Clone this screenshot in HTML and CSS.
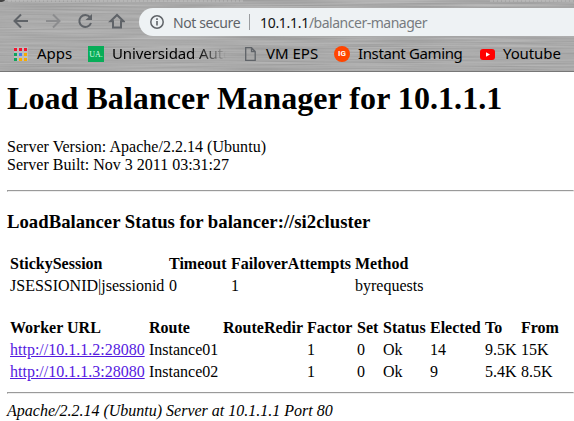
FILE: index.html
```html
<!DOCTYPE html>
<html lang="en">
<head>
<meta charset="utf-8">
<title>Balancer Manager</title>
<link rel="stylesheet" href="styles.css">
</head>
<body>
<header class="browser">
  <svg class="metal" width="574" height="72" aria-hidden="true">
    <filter id="brushed" x="0" y="0" width="100%" height="100%" color-interpolation-filters="sRGB">
      <feTurbulence type="fractalNoise" baseFrequency="0.009 0.6" numOctaves="2" seed="4"/>
      <feColorMatrix values="0.17 0 0 0 0.582  0.17 0 0 0 0.582  0.17 0 0 0 0.582  0 0 0 0 1"/>
    </filter>
    <rect width="574" height="72" filter="url(#brushed)"/>
    <path d="M8 1H243M490 1H574" stroke="#c2c2c2" stroke-width="2" stroke-dasharray="3 1" opacity=".5"/>
    <path d="M0 0H5Q4 2 0 2Z" fill="#444"/>
  </svg>
  <div class="toolbar">
    <svg class="nav" viewBox="0 0 112 16" width="112" height="16" fill="none" stroke="#5f6368" stroke-width="2">
      <path d="M15 8H2.500M8 1.500 1.500 8 8 14.500"/>
      <path d="M33 8H45.500M40 1.500 46.500 8 40 14.500" stroke="#8b8c8e"/>
      <path d="M77 4.200A6 6 0 1 0 78 10"/>
      <path d="M79 1V7H72.500Z" fill="#5f6368" stroke="none"/>
      <path d="M97.500 8.300H100V14.500H108V8.300H110.500L104 2Z"/>
    </svg>
    <div class="omnibox">
      <svg width="14" height="14" viewBox="0 0 14 14"><circle cx="7" cy="7" r="6.200" fill="none" stroke="#5f6368" stroke-width="1.500"/><path d="M7 6V10.500M7 3.300V4.900" stroke="#5f6368" stroke-width="1.600"/></svg>
      <span class="secure">Not secure</span>
      <span class="divider"></span>
      <span class="url"><b>10.1.1.1</b>/balancer-manager</span>
    </div>
  </div>
  <nav class="bookmarks">
    <span class="mark apps"><svg width="14" height="14"><path d="M0 0h14v14H0z" fill="#dedede" opacity=".35"/><path d="M0 1h3v3H0zM5 1h3v3H5zM10 1h3v3h-3z" fill="#f01630"/><path d="M0 6h3v3H0zM0 11h3v3H0z" fill="#0fa45c"/><path d="M5 6h3v3H5z" fill="#4979ee"/><path d="M10 6h3v3h-3zM5 11h3v3H5zM10 11h3v3h-3z" fill="#f8ab00"/></svg><span>Apps</span></span>
    <span class="mark uni"><i class="ua">UA.</i><span>Universidad Auto</span></span>
    <span class="mark vm"><svg width="11" height="14" fill="none" stroke="#5f6368" stroke-width="1.300"><path d="M.7.700H6.500L10.200 4.500V13.300H.7ZM6.500.7V4.500H10.200"/></svg><span>VM EPS</span></span>
    <span class="mark ig"><i class="disc">IG</i><span>Instant Gaming</span></span>
    <span class="mark yt"><svg width="15" height="11"><rect width="15" height="11" rx="3" fill="#f00"/><path d="M6 3.200V7.800L10 5.500Z" fill="#fff"/></svg><span>Youtube</span></span>
  </nav>
</header>
<main>
  <h1>Load Balancer Manager for 10.1.1.1</h1>
  <dl>
    <dt class="version">Server Version: Apache/2.2.14 (Ubuntu)</dt>
    <dt>Server Built: Nov  3 2011 03:31:27</dt>
  </dl>
  <hr>
  <h3>LoadBalancer Status for balancer://si2cluster</h3>
  <table>
    <colgroup><col class="w155"><col class="w58"><col class="w120"><col></colgroup>
    <tr><th>StickySession</th><th>Timeout</th><th>FailoverAttempts</th><th>Method</th></tr>
    <tr><td>JSESSIONID|jsessionid</td><td>0</td><td>1</td><td>byrequests</td></tr>
  </table>
  <br>
  <table>
    <colgroup><col class="w135"><col class="w70"><col class="w80"><col class="w46"><col class="w22"><col class="w43"><col class="w51"><col class="w32"><col></colgroup>
    <tr><th>Worker URL</th><th>Route</th><th>RouteRedir</th><th>Factor</th><th>Set</th><th>Status</th><th>Elected</th><th>To</th><th>From</th></tr>
    <tr><td><a href="#">http://10.1.1.2:28080</a></td><td>Instance01</td><td></td><td>1</td><td>0</td><td>Ok</td><td>14</td><td>9.5K</td><td>15K</td></tr>
    <tr><td><a href="#">http://10.1.1.3:28080</a></td><td>Instance02</td><td></td><td>1</td><td>0</td><td>Ok</td><td>9</td><td>5.4K</td><td>8.5K</td></tr>
  </table>
  <hr class="end">
  <address>Apache/2.2.14 (Ubuntu) Server at 10.1.1.1 Port 80</address>
</main>
</body>
</html>
```
FILE: styles.css
```css
html { overflow: hidden; }
body { margin: 0; background: #fff; color: #000; font: 16px "Liberation Serif", serif; }
.browser {
  position: relative;
  box-sizing: border-box;
  height: 72px;
  padding-top: 8px;
  border-bottom: 1px solid #777;
  background: #a9a9a9;
  font: 15px "Noto Sans", sans-serif;
  overflow: hidden;
}
.metal { position: absolute; left: 0; top: 0; }
.toolbar { position: relative; display: flex; align-items: center; height: 28px; }
.nav { margin: -2px 14px 0 13px; }
.omnibox {
  display: flex;
  align-items: center;
  flex: 1;
  height: 28px;
  box-sizing: border-box;
  padding-left: 11px;
  border-radius: 14px 0 0 14px;
  background: #eef2f4;
  color: #777b80;
  white-space: nowrap;
}
.secure { width: 68px; margin-left: 9px; color: #5f6368; font-size: 14px; letter-spacing: -.4px; }
.divider { width: 1px; height: 16px; margin: 0 10px 0 8px; background: #9a9da0; }
.url { font-size: 14px; letter-spacing: -.49px; }
.url b { font-weight: 400; color: #111; letter-spacing: -.3px; }
.bookmarks { position: relative; display: flex; align-items: center; height: 36px; padding-left: 14px; white-space: nowrap; }
.mark { display: flex; align-items: center; flex: none; }
.mark i { display: block; font-style: normal; }
.mark span { margin-top: -2px; }
.apps { width: 74px; gap: 9px; }
.uni { width: 157px; gap: 8px; }
.uni span { letter-spacing: -.1px; -webkit-mask-image: linear-gradient(90deg, #000 85px, transparent 114px); mask-image: linear-gradient(90deg, #000 85px, transparent 114px); }
.vm { width: 89px; gap: 10px; }
.ig { width: 146px; gap: 8px; }
.ig span { letter-spacing: -.38px; }
.yt { gap: 8px; }
.yt span { letter-spacing: -.1px; }
.ua { width: 16px; height: 16px; background: #08ad58; color: #d5ffe7; font: 8px/18px "Liberation Serif", serif; text-align: center; }
.disc { width: 16px; height: 16px; border-radius: 50%; background: #ff4500; color: #fff; font: bold 8px/16px Roboto, sans-serif; text-align: center; }
main { margin-left: 7px; padding-top: 8px; white-space: nowrap; }
h1 { margin: 0 0 21px; font-size: 32px; line-height: 37px; letter-spacing: .06px; }
dl { margin: 0 0 16px; line-height: 18px; }
.version { letter-spacing: .03px; }
hr { margin: 0; }
h3 { margin: 19px 0 20px; font-size: 18.72px; line-height: 21px; letter-spacing: .02px; }
th { text-align: left; }
.w155 { width: 157px; }
.w58 { width: 60px; }
.w120 { width: 122px; }
.w135 { width: 137px; }
.w70 { width: 72px; }
.w80 { width: 82px; }
.w46 { width: 48px; }
.w22 { width: 24px; }
.w43 { width: 45px; }
.w51 { width: 53px; }
.w32 { width: 34px; }
a { color: #551adf; }
hr.end { margin-top: 8px; }
address { margin-top: 8px; }
```
